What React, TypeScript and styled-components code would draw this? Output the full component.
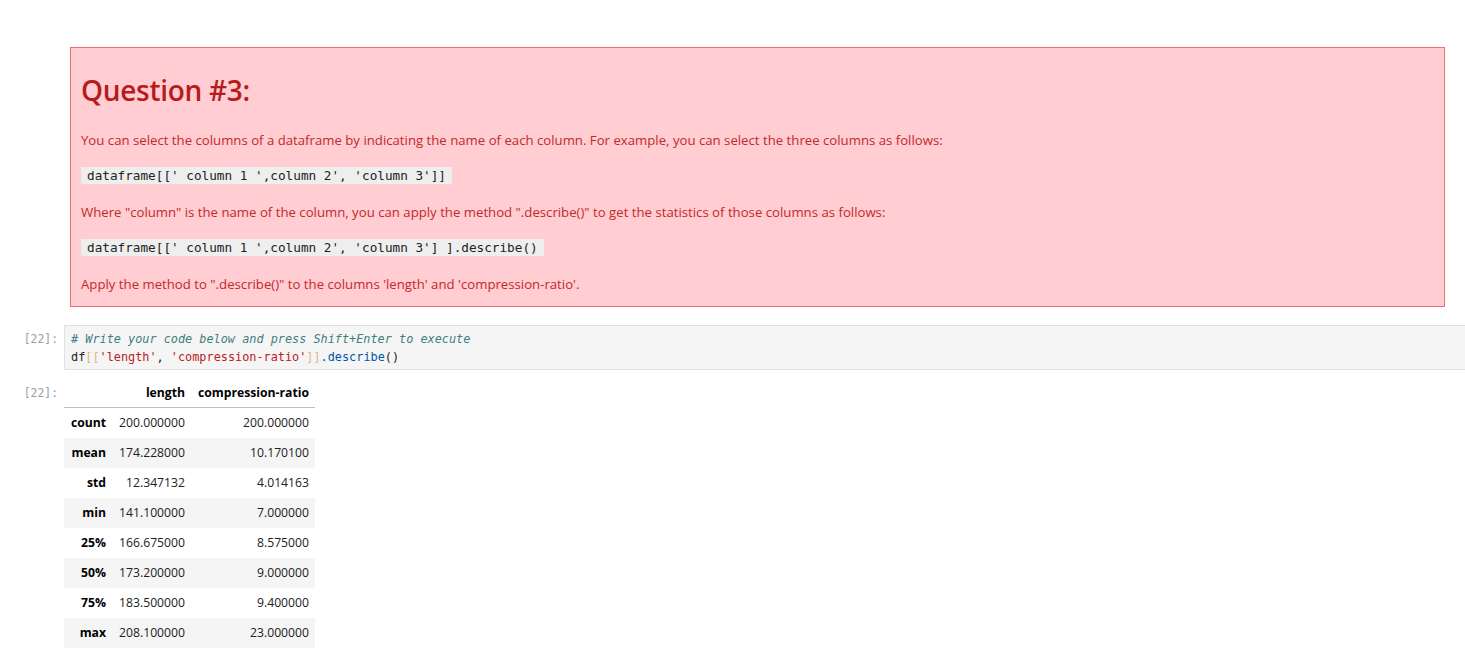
import React from "react";
import styled, { createGlobalStyle } from "styled-components";

const Global = createGlobalStyle`
  html, body { margin: 0; padding: 0; background: #ffffff; }
  body { font-family: "Open Sans", "Noto Sans", sans-serif; color: #212121; }
`;

const Notebook = styled.div`
  padding-top: 47px;
  display: flex;
  flex-direction: column;
`;

const Cell = styled.div<{ $mt?: number }>`
  display: grid;
  grid-template-columns: 64px 1fr;
  margin-top: ${(p) => p.$mt ?? 0}px;
`;

const Prompt = styled.div<{ $pt?: number }>`
  font-family: "DejaVu Sans Mono", "Liberation Mono", monospace;
  font-size: 11.4px;
  color: #9e9e9e;
  text-align: right;
  padding-right: 6px;
  padding-top: ${(p) => p.$pt ?? 0}px;
  line-height: 18px;
`;

const MarkdownArea = styled.div`
  padding-left: 6px;
  padding-right: 20px;
`;

const Alert = styled.div`
  background: #ffcdd2;
  border: 1px solid #e57373;
  padding: 24px 10px 12px 10px;
  color: #c62828;
  font-size: 13.2px;
  display: flex;
  flex-direction: column;
`;

const Heading = styled.h2`
  margin: 0 0 22px 0;
  font-size: 28px;
  font-weight: 600;
  line-height: 36px;
  color: #b71c1c;
  letter-spacing: -0.3px;
`;

const Body = styled.div`
  display: flex;
  flex-direction: column;
  gap: 16px;
`;

const Para = styled.p`
  margin: 0;
  line-height: 20px;
`;

const InlineCode = styled.code`
  font-family: "DejaVu Sans Mono", "Liberation Mono", monospace;
  font-size: 12.7px;
  color: #222;
  background: #eeeeee;
  padding: 1px 6px;
  line-height: 18px;
  white-space: pre;
`;

const CodeLine = styled.div`
  line-height: 18px;
  padding-bottom: 1px;
`;

const InputBox = styled.div`
  background: #f5f5f5;
  border: 1px solid #e0e0e0;
  border-right: none;
  padding: 4px 6px 3px 6px;
  font-family: "DejaVu Sans Mono", "Liberation Mono", monospace;
  font-size: 11.85px;
  line-height: 18px;
  color: #212121;
  white-space: pre;
`;

const Comment = styled.span`
  color: #408080;
  font-style: italic;
`;
const Bracket = styled.span`
  color: #e0b880;
`;
const Str = styled.span`
  color: #ba2121;
`;
const Attr = styled.span`
  color: #0055aa;
`;

const OutputArea = styled.div`
  padding-top: 9px;
`;

const Table = styled.table`
  border-collapse: collapse;
  font-size: 12.2px;
  color: #000;
`;

const HeadCell = styled.th<{ $w: number }>`
  width: ${(p) => p.$w}px;
  box-sizing: border-box;
  height: 28px;
  padding: 0 6px;
  text-align: right;
  font-weight: 700;
  border-bottom: 1px solid #bdbdbd;
  vertical-align: middle;
`;

const Row = styled.tr<{ $alt: boolean }>`
  background: ${(p) => (p.$alt ? "#f5f5f5" : "transparent")};
`;

const IndexCell = styled.th`
  height: 30px;
  padding: 0 6px;
  text-align: right;
  font-weight: 700;
`;

const ValueCell = styled.td`
  height: 30px;
  padding: 0 6px;
  text-align: right;
  color: #212121;
`;

const rows: [string, string, string][] = [
  ["count", "200.000000", "200.000000"],
  ["mean", "174.228000", "10.170100"],
  ["std", "12.347132", "4.014163"],
  ["min", "141.100000", "7.000000"],
  ["25%", "166.675000", "8.575000"],
  ["50%", "173.200000", "9.000000"],
  ["75%", "183.500000", "9.400000"],
  ["max", "208.100000", "23.000000"],
];

export default function App() {
  return (
    <>
      <Global />
      <Notebook>
        <Cell>
          <div />
          <MarkdownArea>
            <Alert>
              <Heading>Question #3:</Heading>
              <Body>
                <Para>
                  You can select the columns of a dataframe by indicating the name of each column. For example, you can select the three columns as follows:
                </Para>
                <CodeLine>
                  <InlineCode>{"dataframe[[' column 1 ',column 2', 'column 3']]"}</InlineCode>
                </CodeLine>
                <Para>
                  Where "column" is the name of the column, you can apply the method ".describe()" to get the statistics of those columns as follows:
                </Para>
                <CodeLine>
                  <InlineCode>{"dataframe[[' column 1 ',column 2', 'column 3'] ].describe()"}</InlineCode>
                </CodeLine>
                <Para>Apply the method to ".describe()" to the columns 'length' and 'compression-ratio'.</Para>
              </Body>
            </Alert>
          </MarkdownArea>
        </Cell>
        <Cell $mt={18}>
          <Prompt $pt={5}>[22]:</Prompt>
          <InputBox>
            <Comment># Write your code below and press Shift+Enter to execute</Comment>
            {"\n"}
            df<Bracket>[[</Bracket>
            <Str>'length'</Str>, <Str>'compression-ratio'</Str>
            <Bracket>]]</Bracket>
            <Attr>.describe</Attr>()
          </InputBox>
        </Cell>
        <Cell>
          <Prompt $pt={14}>[22]:</Prompt>
          <OutputArea>
            <Table>
              <thead>
                <tr>
                  <HeadCell $w={48}></HeadCell>
                  <HeadCell $w={79}>length</HeadCell>
                  <HeadCell $w={124}>compression-ratio</HeadCell>
                </tr>
              </thead>
              <tbody>
                {rows.map((r, i) => (
                  <Row key={r[0]} $alt={i % 2 === 1}>
                    <IndexCell>{r[0]}</IndexCell>
                    <ValueCell>{r[1]}</ValueCell>
                    <ValueCell>{r[2]}</ValueCell>
                  </Row>
                ))}
              </tbody>
            </Table>
          </OutputArea>
        </Cell>
      </Notebook>
    </>
  );
}
